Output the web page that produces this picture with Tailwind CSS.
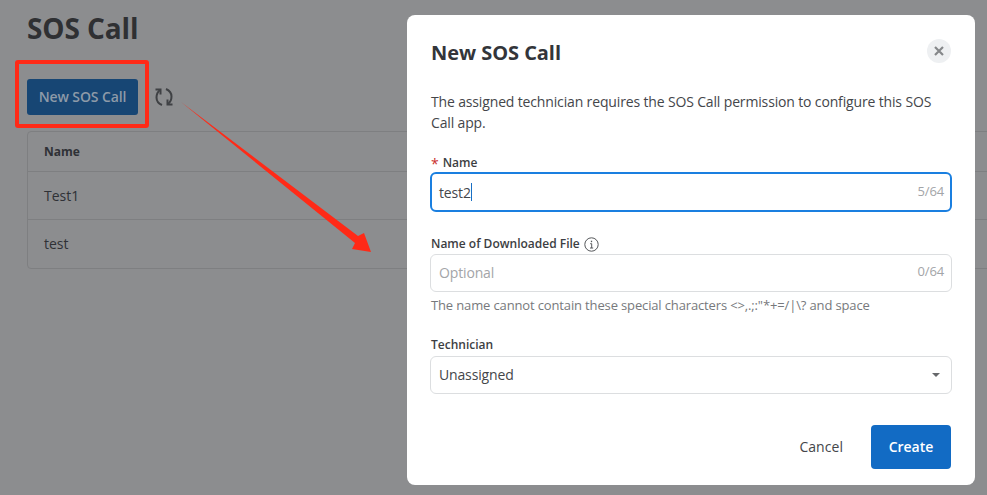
<!DOCTYPE html>
<html lang="en">
<head>
  <meta charset="UTF-8">
  <title>SOS Call</title>
  <script src="https://cdn.jsdelivr.net/npm/@tailwindcss/browser@4"></script>
</head>
<body class="bg-[#8c8d8f] font-['Open_Sans','Noto_Sans',sans-serif] overflow-hidden">
<div class="relative w-[987px] h-[495px] overflow-hidden">

  <!-- page behind the overlay -->
  <div class="pl-[27px]">
    <h1 class="pt-[9px] h-[79px] text-[28px] leading-[38px] font-bold tracking-[-0.1px] text-[#2f3033]">SOS Call</h1>
    <div class="flex items-center h-[36px]">
      <button class="w-[111px] h-[36px] pb-[2px] rounded-[3px] bg-[#174674] text-[14px] font-semibold tracking-[-0.1px] text-[#8d9aa8]">New SOS Call</button>
      <svg class="ml-[16px]" width="20" height="20" viewBox="0 0 20 20" fill="none" stroke="#3f4144" stroke-width="2">
        <path d="M8 18C4.5 16.5 2.5 14 2.5 10.5C2.5 7.5 3.5 5 6 3" />
        <path d="M1.5 2.5H6.5V7.5" />
        <path d="M12 2C15.5 3.5 17.5 6 17.5 9.5C17.5 12.5 16.5 15 14 17" />
        <path d="M18.5 17.5H13.5V12.5" />
      </svg>
    </div>
    <div class="mt-[16px] w-[1000px] h-[138px] rounded-[4px] border border-[#7e7f81] text-[#2f3136]">
      <div class="h-[40px] flex items-center pl-[16px] text-[12px] font-bold border-b border-[#7e7f81]">Name</div>
      <div class="h-[48px] flex items-center pl-[16px] text-[14px] border-b border-[#7e7f81]">Test1</div>
      <div class="h-[47px] flex items-center pl-[16px] text-[14px]">test</div>
    </div>
  </div>

  <!-- red annotation -->
  <div class="absolute left-[15px] top-[60px] w-[134px] h-[68px] border-[4px] border-[#ff2a17] rounded-[3px]"></div>
  <svg class="absolute left-0 top-0" width="987" height="495" viewBox="0 0 987 495">
    <polygon fill="#ff2a17" points="181,102 358,236 364,233 371,252 352,249 355,243" />
  </svg>

  <!-- modal -->
  <div class="absolute left-[407px] top-[15px] w-[568px] h-[470px] bg-white rounded-[8px] px-[24px] pt-[24px]">
    <div class="flex items-start justify-between">
      <h2 class="text-[20px] leading-[28px] font-bold tracking-[-0.05px] text-[#33353a]">New SOS Call</h2>
      <div class="w-[24px] h-[24px] rounded-full bg-[#eef0f2] flex items-center justify-center">
        <svg width="10" height="10" viewBox="0 0 10 10" stroke="#85878a" stroke-width="2.2"><path d="M1 1L9 9M9 1L1 9" /></svg>
      </div>
    </div>

    <p class="mt-[24px] text-[14px] leading-[21px] tracking-[-0.15px] text-[#44464a]">The assigned technician requires the SOS Call permission to configure this SOS Call app.</p>

    <label class="mt-[22px] flex items-center h-[16px] text-[12px] font-semibold text-[#3c3e42]"><span class="text-[#c9302c] text-[14px] mr-[4px] font-normal">*</span>Name</label>
    <div class="mt-[1px] -mx-px h-[40px] rounded-[6px] border-2 border-[#1a7fe0] flex items-center justify-between pl-[7px] pr-[6px] text-[14px] tracking-[-0.15px] text-[#44464a]">
      <span class="flex items-center">test2<span class="w-px h-[18px] bg-[#1a6fc4]"></span></span>
      <span class="text-[13px] text-[#a3a5a8]">5/64</span>
    </div>

    <label class="mt-[24px] flex items-center gap-[4px] h-[16px] text-[12px] font-semibold text-[#3c3e42]">Name of Downloaded File
      <svg width="15" height="15" viewBox="0 0 15 15" fill="none" stroke="#55575a"><circle cx="7.5" cy="7.5" r="6.7" /><path d="M6.2 6.7H7.7V11M6 11H9.2" /><path d="M7.5 3.7V5.2" stroke-width="1.3" /></svg>
    </label>
    <div class="mt-[2px] -mx-px h-[38px] pb-[2px] rounded-[6px] border border-[#dcdee0] flex items-center justify-between pl-[8px] pr-[7px] text-[14px] tracking-[-0.15px] text-[#a3a5a8]">
      <span>Optional</span>
      <span class="text-[13px]">0/64</span>
    </div>
    <p class="mt-[4px] text-[13px] leading-[18px] tracking-[-0.14px] text-[#77797c]">The name cannot contain these special characters &lt;&gt;,.;:"*+=/|\? and space</p>

    <label class="mt-[23px] flex items-center h-[16px] text-[12px] font-semibold text-[#3c3e42]">Technician</label>
    <div class="mt-[3px] -mx-px h-[38px] rounded-[6px] border border-[#dcdee0] flex items-center justify-between pl-[8px] pr-[11px] text-[14px] tracking-[-0.15px] text-[#44464a]">
      <span class="pb-[2px]">Unassigned</span>
      <span class="w-0 h-0 border-x-[4px] border-x-transparent border-t-[4px] border-t-[#66686b]"></span>
    </div>

    <div class="mt-[31px] flex items-center justify-end">
      <span class="pb-[2px] text-[14px] font-medium tracking-[0.05px] text-[#44464a] mr-[28px]">Cancel</span>
      <button class="w-[80px] h-[44px] pb-[2px] rounded-[4px] bg-[#126bc4] text-white text-[14px] font-semibold">Create</button>
    </div>
  </div>
</div>
</body>
</html>
